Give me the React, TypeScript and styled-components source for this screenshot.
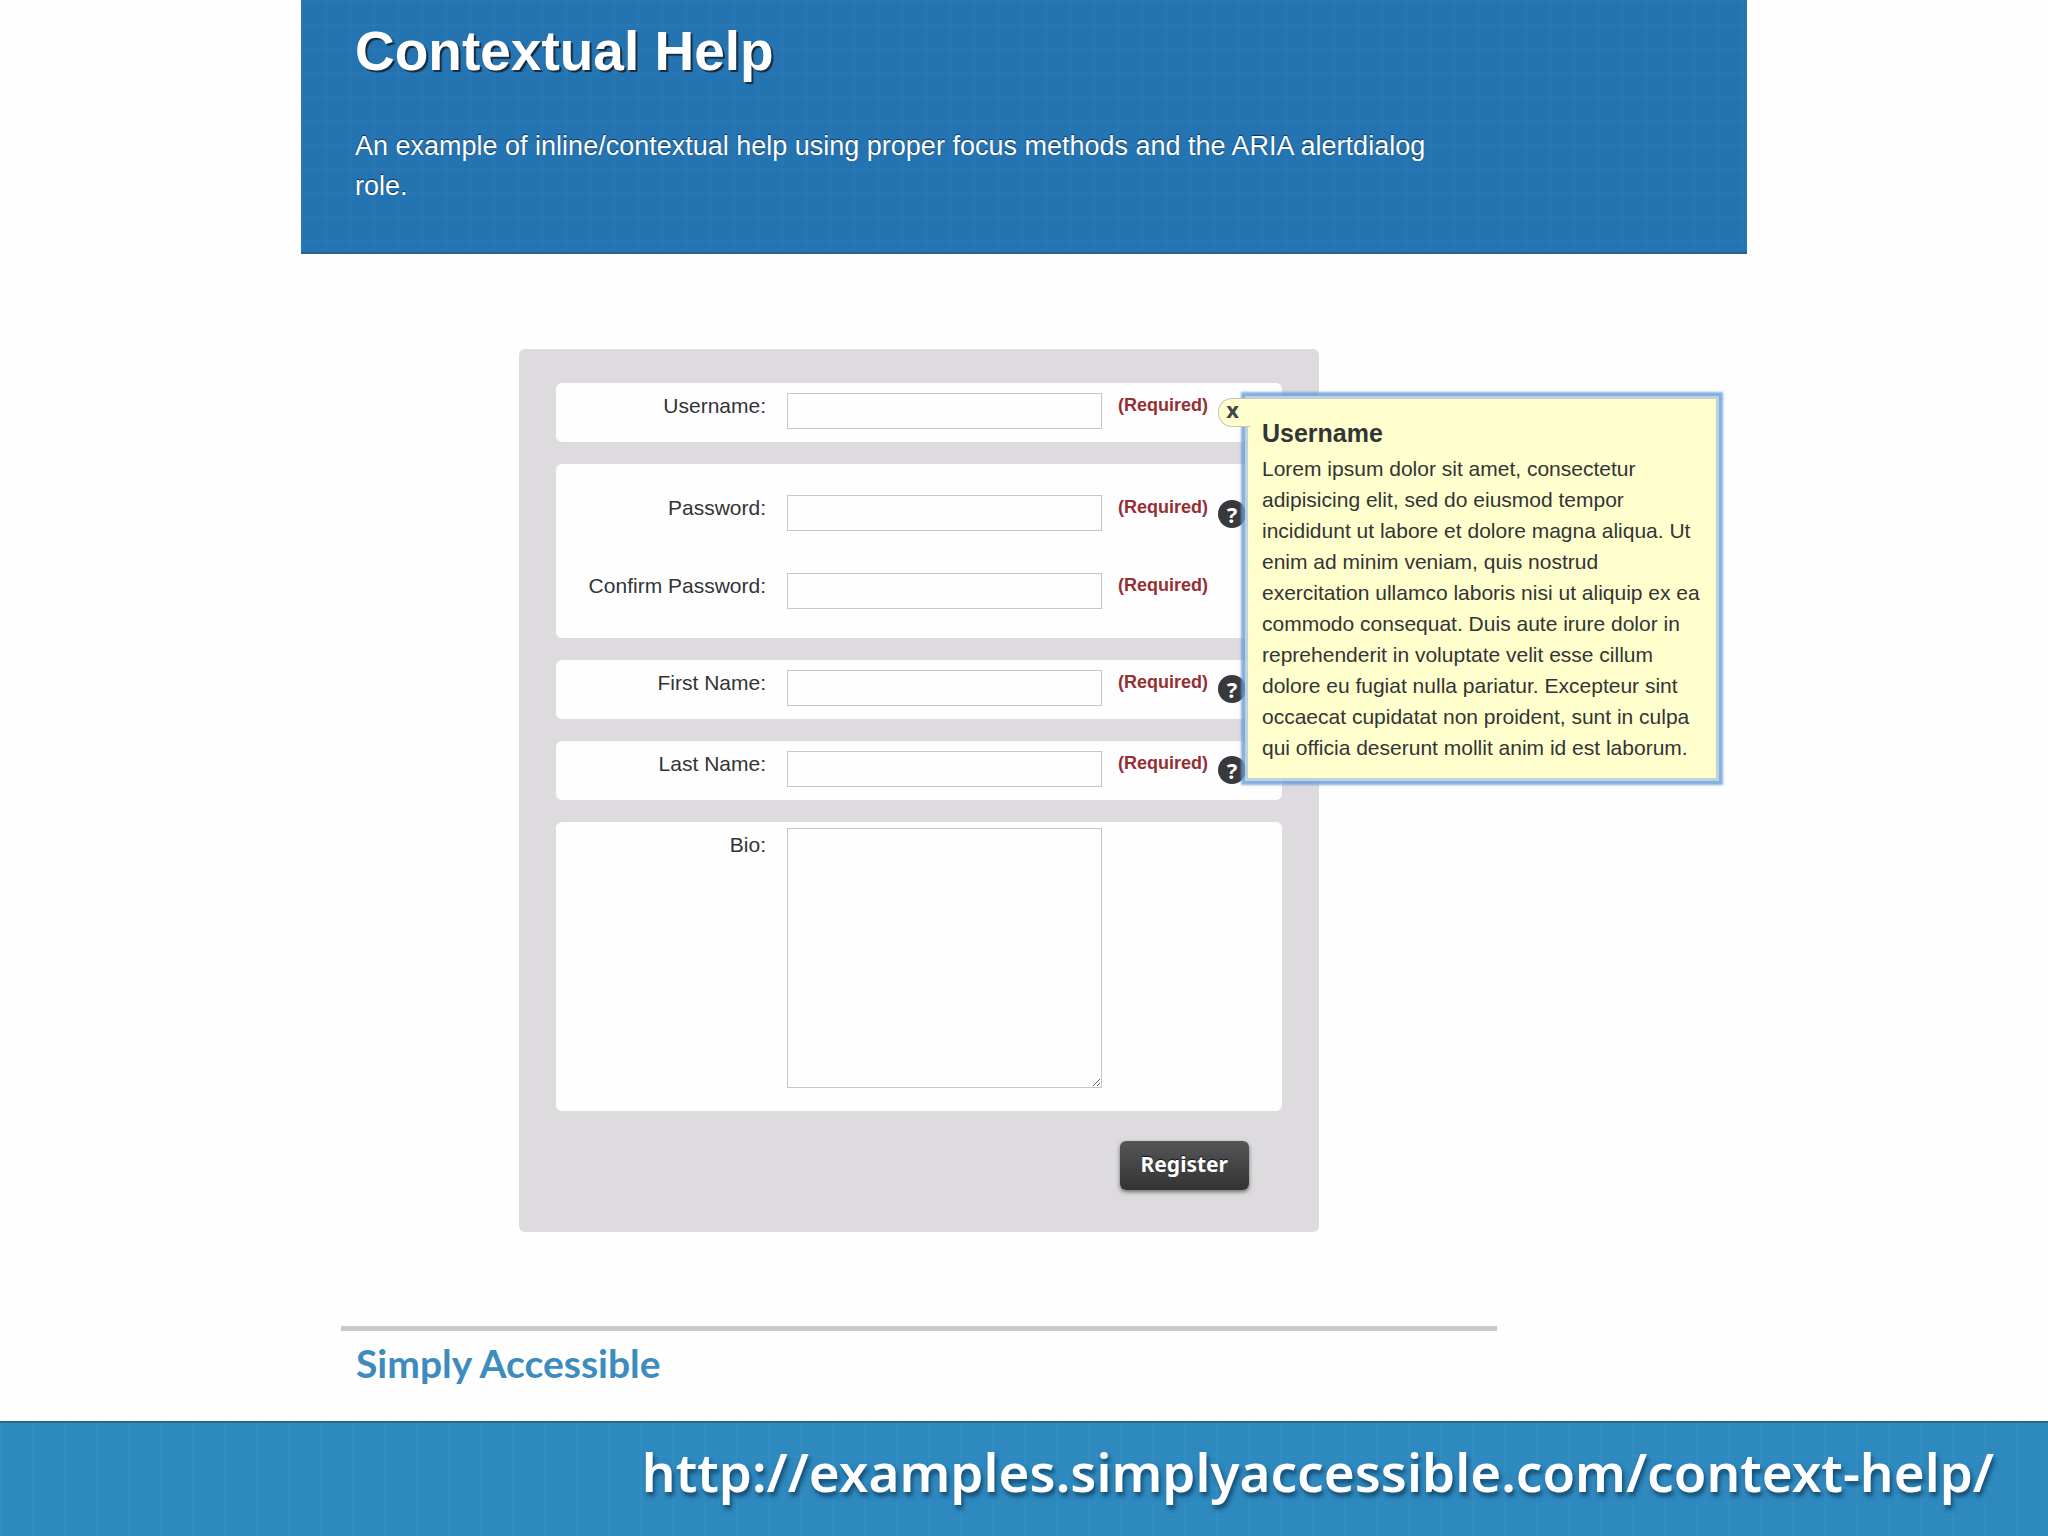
import React from "react";
import styled, { createGlobalStyle, css } from "styled-components";

const sans = `"Liberation Sans", Arial, Helvetica, sans-serif`;
const humanist = `"Noto Sans", "Open Sans", sans-serif`;

const GlobalStyle = createGlobalStyle`
  *, *::before, *::after { box-sizing: border-box; }
  body {
    margin: 0;
    background: #fefefe;
    color: #333436;
    font-family: ${sans};
    font-size: 21px;
    line-height: 31px;
  }
`;

const blueprint = (size: number, alpha: number) => css`
  background-image:
    linear-gradient(to right, rgba(255, 255, 255, ${alpha}) 2px, transparent 2px),
    linear-gradient(to bottom, rgba(255, 255, 255, ${alpha}) 2px, transparent 2px);
  background-size: ${size}px ${size}px;
`;

const Page = styled.div`
  display: flex;
  flex-direction: column;
  min-height: 100vh;
`;

const Site = styled.div`
  width: 100%;
  max-width: 1446px;
  margin: 0 auto;
`;

const Banner = styled.header`
  padding: 9px 54px 46px;
  background-color: #2474b2;
  ${blueprint(24, 0.018)}
  border-bottom: 2px solid #2b5f8c;
  color: #fff;
`;

const Title = styled.h1`
  margin: 0 0 33px;
  font-size: 55px;
  line-height: 84px;
  font-weight: 700;
  text-shadow: 2px 2px 1px rgba(20, 30, 40, 0.85);
`;

const Intro = styled.p`
  max-width: 1100px;
  margin: 0;
  font-size: 27px;
  line-height: 40px;
  text-shadow: 0 -1px 1px rgba(10, 30, 60, 0.8);
`;

const Form = styled.form`
  display: flex;
  flex-direction: column;
  gap: 22px;
  max-width: 800px;
  margin: 95px 0 94px 218px;
  padding: 34px 37px 42px;
  border-radius: 6px;
  background: #dddbde;
`;

const Group = styled.div<{ $padding?: string }>`
  display: flex;
  flex-direction: column;
  gap: 42px;
  padding: ${(p) => p.$padding ?? "10px 0 13px"};
  border-radius: 6px;
  background: #fefefe;
`;

const Row = styled.div`
  display: flex;
  align-items: flex-start;
`;

const Label = styled.label<{ $tall?: boolean }>`
  flex: 0 0 231px;
  padding: ${(p) => (p.$tall ? "4px" : "0")} 21px 0 0;
  line-height: 26px;
  text-align: right;
`;

const control = css`
  display: block;
  width: 315px;
  padding: 4px 8px;
  border: 1px solid #c6c5ca;
  border-radius: 0;
  background: #fefefe;
  color: inherit;
  font: inherit;
  outline: none;
`;

const TextInput = styled.input`
  ${control}
  height: 36px;
`;

const TextArea = styled.textarea`
  ${control}
  height: 260px;
  resize: both;
`;

const Required = styled.span`
  flex: 0 0 109px;
  padding-left: 16px;
  color: #943033;
  font-size: 18px;
  line-height: 24px;
  font-weight: 700;
`;

const HelpSlot = styled.div`
  position: relative;
  width: 28px;
  height: 28px;
  margin: 5px 0 0 7px;
`;

const HelpButton = styled.button`
  display: block;
  width: 28px;
  height: 28px;
  padding: 0;
  border: 0;
  border-radius: 50%;
  background: #39393c;
  color: #fff;
  font: 700 22px/28px ${humanist};
  text-align: center;
`;

const HelpDialog = styled.section`
  position: absolute;
  z-index: 2;
  top: 0;
  left: 29px;
  width: 470px;
  padding: 19px 10px 15px 14px;
  border: 1px solid #cdd2bd;
  background: #feffcd;
  box-shadow:
    0 0 0 2px rgba(190, 213, 240, 0.9),
    0 0 2px 6px rgba(104, 156, 216, 0.8);
`;

const DialogTitle = styled.h2`
  margin: 0 0 4px;
  font-size: 25px;
  line-height: 31px;
`;

const DialogText = styled.p`
  margin: 0;
`;

const CloseButton = styled.button`
  position: absolute;
  top: -1px;
  left: -30px;
  width: 32px;
  height: 29px;
  padding: 0 4px 6px 0;
  border: 1px solid #c4c6bb;
  border-right: 0;
  border-radius: 14px 0 0 14px;
  background: #feffcd;
  color: #444;
  font: 700 22px/21px ${humanist};
  text-align: center;
`;

const Actions = styled.div`
  display: flex;
  justify-content: flex-end;
  padding: 8px 33px 0 0;
`;

const RegisterButton = styled.button`
  height: 49px;
  padding: 0 21px 2px;
  border: 0;
  border-radius: 6px;
  background: linear-gradient(#565658, #333334);
  box-shadow: 0 2px 4px rgba(0, 0, 0, 0.5);
  color: #fff;
  font: 700 21px/47px ${humanist};
  text-shadow: 0 -1px 1px #111;
`;

const Credit = styled.footer`
  max-width: 1156px;
  margin-left: 40px;
  padding: 7px 15px 0;
  border-top: 5px solid #cac9cb;
`;

const CreditLink = styled.a`
  color: #3d8cbd;
  font: 700 39px/50px Lato, sans-serif;
  text-decoration: none;
`;

const AddressBar = styled.aside`
  display: flex;
  justify-content: flex-end;
  margin-top: auto;
  padding: 8px 54px 23px;
  background-color: #2e89bf;
  ${blueprint(32, 0.025)}
  border-top: 2px solid #2a6688;
`;

const AddressLink = styled.a`
  color: #fff;
  font: 600 53px/82px ${humanist};
  text-decoration: none;
  text-shadow: 2px 4px 4px rgba(10, 50, 80, 0.7);
`;

type FieldProps = {
  id: string;
  label: string;
  type?: string;
  help?: React.ReactNode;
};

function Field({ id, label, type = "text", help }: FieldProps) {
  return (
    <Row>
      <Label htmlFor={id}>{label}</Label>
      <TextInput id={id} name={id} type={type} required />
      <Required>(Required)</Required>
      {help}
    </Row>
  );
}

function Help({ topic }: { topic: string }) {
  return (
    <HelpSlot>
      <HelpButton type="button" aria-label={`Help: ${topic}`}>?</HelpButton>
    </HelpSlot>
  );
}

function UsernameHelp() {
  return (
    <HelpSlot>
      <HelpDialog role="alertdialog" aria-labelledby="help-title" aria-describedby="help-text">
        <CloseButton type="button" aria-label="Close help">x</CloseButton>
        <DialogTitle id="help-title">Username</DialogTitle>
        <DialogText id="help-text">
          Lorem ipsum dolor sit amet, consectetur adipisicing elit, sed do eiusmod tempor
          incididunt ut labore et dolore magna aliqua. Ut enim ad minim veniam, quis nostrud
          exercitation ullamco laboris nisi ut aliquip ex ea commodo consequat. Duis aute irure
          dolor in reprehenderit in voluptate velit esse cillum dolore eu fugiat nulla pariatur.
          Excepteur sint occaecat cupidatat non proident, sunt in culpa qui officia deserunt
          mollit anim id est laborum.
        </DialogText>
      </HelpDialog>
    </HelpSlot>
  );
}

export default function App() {
  return (
    <Page>
      <GlobalStyle />
      <Site>
        <Banner>
          <Title>Contextual Help</Title>
          <Intro>
            An example of inline/contextual help using proper focus methods and the ARIA
            alertdialog role.
          </Intro>
        </Banner>
        <Form onSubmit={(e) => e.preventDefault()}>
          <Group>
            <Field id="username" label="Username:" help={<UsernameHelp />} />
          </Group>
          <Group $padding="31px 0 29px">
            <Field id="password" label="Password:" type="password" help={<Help topic="Password" />} />
            <Field id="confirm" label="Confirm Password:" type="password" />
          </Group>
          <Group>
            <Field id="first-name" label="First Name:" help={<Help topic="First Name" />} />
          </Group>
          <Group>
            <Field id="last-name" label="Last Name:" help={<Help topic="Last Name" />} />
          </Group>
          <Group $padding="6px 0 23px">
            <Row>
              <Label htmlFor="bio" $tall>Bio:</Label>
              <TextArea id="bio" name="bio" />
            </Row>
          </Group>
          <Actions>
            <RegisterButton type="submit">Register</RegisterButton>
          </Actions>
        </Form>
        <Credit>
          <CreditLink href="#simply-accessible">Simply Accessible</CreditLink>
        </Credit>
      </Site>
      <AddressBar>
        <AddressLink href="#context-help">http://examples.simplyaccessible.com/context-help/</AddressLink>
      </AddressBar>
    </Page>
  );
}
